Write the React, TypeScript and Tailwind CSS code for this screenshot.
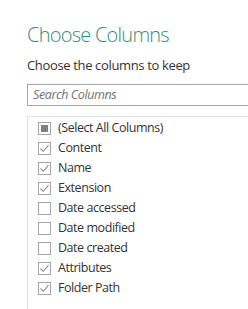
import React from "react";

type Item = { label: string; state: "checked" | "unchecked" | "mixed" };

const items: Item[] = [
  { label: "(Select All Columns)", state: "mixed" },
  { label: "Content", state: "checked" },
  { label: "Name", state: "checked" },
  { label: "Extension", state: "checked" },
  { label: "Date accessed", state: "unchecked" },
  { label: "Date modified", state: "unchecked" },
  { label: "Date created", state: "unchecked" },
  { label: "Attributes", state: "checked" },
  { label: "Folder Path", state: "checked" },
];

function Box({ state }: { state: Item["state"] }) {
  return (
    <div className="w-[13px] h-[13px] border border-[#a6a6a6] bg-white flex items-center justify-center shrink-0">
      {state === "mixed" && <div className="w-[7px] h-[7px] bg-[#7f7f7f]" />}
      {state === "checked" && (
        <svg width="11" height="11" viewBox="0 0 11 11">
          <path d="M1.5 5.5 L4.2 8.3 L9.5 2.2" fill="none" stroke="#8a8a8a" strokeWidth="1.1" />
        </svg>
      )}
    </div>
  );
}

export default function App() {
  return (
    <div
      className="w-[248px] h-[309px] bg-white overflow-hidden pl-[27px] pt-[22px]"
      style={{ fontFamily: '"Open Sans", "Noto Sans", sans-serif' }}
    >
      <div className="text-[20px] leading-[26px] font-light text-[#3a8c78] tracking-[-0.75px]">Choose Columns</div>
      <div className="mt-[8px] text-[13px] leading-[18px] text-[#333333] tracking-[-0.35px]">Choose the columns to keep</div>
      <div className="mt-[10px] h-[22px] border border-[#a6a6a6] border-r-0 flex items-center pl-[5px] -mr-px">
        <span className="italic text-[12.5px] text-[#707070] tracking-[-0.4px]">Search Columns</span>
      </div>
      <div className="mt-[10px] border-l border-t border-[#e0e0e0] pt-[1px] pl-[10px] h-[200px]">
        {items.map((it) => (
          <div key={it.label} className="h-[20px] flex items-center gap-[7px]">
            <Box state={it.state} />
            <span className="text-[12.5px] text-[#333333] tracking-[-0.45px] whitespace-nowrap">{it.label}</span>
          </div>
        ))}
      </div>
    </div>
  );
}
